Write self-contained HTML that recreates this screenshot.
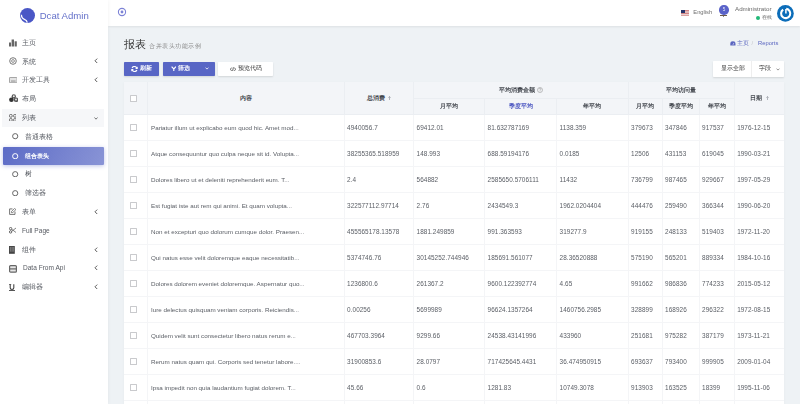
<!DOCTYPE html>
<html><head><meta charset="utf-8">
<style>
*{box-sizing:border-box;margin:0;padding:0}
html,body{width:800px;height:404px;overflow:hidden;}
body{filter:blur(0.35px);background:#eef2f5;font-family:"Liberation Sans",sans-serif;color:#414750}
.abs{position:absolute}
#sidebar{position:absolute;left:0;top:0;width:108px;height:404px;background:#fff;box-shadow:0 0 4px rgba(0,0,0,.06);z-index:3}
#nav{position:absolute;left:108px;top:0;width:692px;height:26px;background:#fff;box-shadow:0 1px 2px rgba(0,0,0,.075);z-index:2}
.logo-c{position:absolute;left:20px;top:7.5px;width:15px;height:15px;border-radius:50%;background:#4c5dc4}
.logo-t{position:absolute;left:39.7px;top:9.7px;font-size:9.6px;color:#6470c9;letter-spacing:0}
.mi{position:absolute;left:0;width:108px;height:18px;font-size:6.55px;color:#565a61}
.mi .ic{position:absolute;left:9px;top:5px;width:7px;height:7px}
.mi .tx{position:absolute;left:22px;top:4.9px;white-space:nowrap}
.mi .ch{position:absolute;left:94px;top:4px;font-size:7px;color:#777}
.sub .ic{left:12.5px;top:6px;width:6px;height:6px;border:1.1px solid #666;border-radius:50%}
.sub .tx{left:24.7px}
#title{position:absolute;left:124px;top:37.5px;font-size:10.6px;color:#333}
#subtitle{position:absolute;left:149px;top:42.3px;font-size:6.3px;letter-spacing:0.5px;color:#888}
.btn{position:absolute;top:61.8px;height:14.6px;border-radius:0.8px;font-size:5.6px;font-weight:bold;color:#fff;background:#5866c5;box-shadow:0 1px 2px rgba(0,0,0,.12)}
.btnw{background:#fff;color:#333;font-weight:normal}
table{position:absolute;left:124px;top:81.5px;width:660px;border-collapse:collapse;table-layout:fixed;background:#fff;box-shadow:0 1px 3px rgba(0,0,0,.04)}
th{background:#f3f5f8;font-size:5.9px;font-weight:bold;color:#41454c;height:16.7px;border:1px solid #ebeef2;text-align:center;white-space:nowrap;padding:0}
tr.h2 th{height:16.8px}
th[rowspan]{padding-top:1.8px}
th[colspan]{padding-top:1.6px}
th.c0[rowspan]{padding-top:2.6px}
td{font-size:6.4px;letter-spacing:0.05px;color:#5a5e65;height:26px;border:1px solid #f4f5f7;padding:0 0 0 2.6px;white-space:nowrap;overflow:hidden}
td.ct{font-size:6.25px;letter-spacing:0;padding-left:3.5px}
td.c0{text-align:left;padding:0 0 0 6.3px}
th.c0{text-align:left;padding:0 0 0 6.3px}
tr:first-child th{border-top:0}
th:first-child,td:first-child{border-left:0}
th:last-child,td:last-child{border-right:0}
.cb{display:inline-block;width:7px;height:7.6px;border:1px solid #c9cacd;border-radius:0.6px;background:#fff;vertical-align:middle;position:relative;top:-0.9px}
</style></head><body>
<div id="sidebar">
  <svg class="abs" style="left:20px;top:7.8px" width="15" height="15" viewBox="0 0 15 15"><circle cx="7.5" cy="7.5" r="7.5" fill="#4a57c6"/><path d="M1.4 6.8 Q1.6 10.6 4.8 11.6 Q6.8 12.2 7.3 14.6" fill="none" stroke="#fff" stroke-width="1.3"/></svg>
  <div class="logo-t">Dcat Admin</div>
  <div class="mi" style="top:34px"><svg class="abs" style="left:8.7px;top:5px" width="8" height="7.5" viewBox="0 0 8 7.5"><rect x="0" y="3.5" width="2" height="4" fill="#666"/><rect x="2.6" y="0.5" width="2.4" height="7" fill="#666"/><rect x="5.6" y="2.3" width="2.2" height="5.2" fill="#666"/></svg><span class="tx">主页</span></div>
<div class="mi" style="top:52.7px"><svg class="abs" style="left:8.6px;top:4.4px" width="8" height="8" viewBox="0 0 8 8"><circle cx="4" cy="4" r="3.3" fill="none" stroke="#6a6a6a" stroke-width="0.9"/><circle cx="4" cy="4" r="1.4" fill="none" stroke="#777" stroke-width="0.8"/></svg><span class="tx">系统</span><svg class="abs" style="left:94.2px;top:5.7px" width="4" height="5.6" viewBox="0 0 4 5.6"><path d="M3.2 0.6 L1 2.8 L3.2 5" fill="none" stroke="#5a5a5a" stroke-width="1"/></svg></div>
<div class="mi" style="top:71.2px"><svg class="abs" style="left:8.7px;top:5.8px" width="8.6" height="6.2" viewBox="0 0 8.6 6.2"><rect x="0.45" y="0.45" width="7.7" height="5.3" rx="0.6" fill="#e4e4e4" stroke="#999" stroke-width="0.9"/><rect x="2" y="3.6" width="4.6" height="0.9" fill="#888"/></svg><span class="tx">开发工具</span><svg class="abs" style="left:94.2px;top:5.7px" width="4" height="5.6" viewBox="0 0 4 5.6"><path d="M3.2 0.6 L1 2.8 L3.2 5" fill="none" stroke="#5a5a5a" stroke-width="1"/></svg></div>
<div class="mi" style="top:89.8px"><svg class="abs" style="left:8.7px;top:4.6px" width="9.5" height="8.5" viewBox="0 0 9.5 8.5"><circle cx="4.8" cy="2.4" r="2.2" fill="#555"/><circle cx="2.4" cy="5.8" r="2.3" fill="#333"/><circle cx="7" cy="5.8" r="2.3" fill="#555"/><circle cx="4.8" cy="2.2" r="1" fill="#eee"/><circle cx="7" cy="5.5" r="1" fill="#ddd"/></svg><span class="tx">布局</span></div>
<div class="mi" style="top:109px;left:2px;width:101.8px;height:17.6px;background:#f6f7f9"><svg class="abs" style="left:6.7px;top:4.6px" width="7.8" height="7.8" viewBox="0 0 7.8 7.8"><g fill="none" stroke="#666" stroke-width="1"><rect x="0.5" y="0.5" width="2.7" height="2.7" rx="1"/><rect x="4.6" y="0.5" width="2.7" height="2.7" rx="1"/><rect x="0.5" y="4.6" width="2.7" height="2.7" rx="1"/><rect x="4.6" y="4.6" width="2.7" height="2.7" rx="1"/></g></svg><span class="tx" style="left:20px">列表</span><svg class="abs" style="left:92px;top:7.6px" width="4" height="3" viewBox="0 0 4 3"><path d="M0.5 0.5 L2 2.2 L3.5 0.5" fill="none" stroke="#666" stroke-width="0.9"/></svg></div>
<div class="mi sub" style="top:127.8px"><svg class="abs" style="left:12.2px;top:5.7px" width="6.4" height="6.4" viewBox="0 0 6.4 6.4"><circle cx="3.2" cy="3.2" r="2.6" fill="none" stroke="#666" stroke-width="1"/></svg><span class="tx">普通表格</span></div>
<div class="mi sub" style="top:146.5px;left:3px;width:100.6px;height:18.6px;background:linear-gradient(118deg,#5c6bc6,rgba(92,107,198,.72));color:#fff;font-weight:bold;border-radius:1px;box-shadow:0 1px 4px rgba(92,107,198,.4)"><svg class="abs" style="left:9.2px;top:6px" width="6.4" height="6.4" viewBox="0 0 6.4 6.4"><circle cx="3.2" cy="3.2" r="2.6" fill="none" stroke="#fff" stroke-width="1"/></svg><span class="tx" style="left:21.7px;top:5.3px;font-size:6.3px">组合表头</span></div>
<div class="mi sub" style="top:165px"><svg class="abs" style="left:12.2px;top:5.7px" width="6.4" height="6.4" viewBox="0 0 6.4 6.4"><circle cx="3.2" cy="3.2" r="2.6" fill="none" stroke="#666" stroke-width="1"/></svg><span class="tx">树</span></div>
<div class="mi sub" style="top:184px"><svg class="abs" style="left:12.2px;top:5.7px" width="6.4" height="6.4" viewBox="0 0 6.4 6.4"><circle cx="3.2" cy="3.2" r="2.6" fill="none" stroke="#666" stroke-width="1"/></svg><span class="tx">筛选器</span></div>
<div class="mi" style="top:203px"><svg class="abs" style="left:8.8px;top:5px" width="7.5" height="7" viewBox="0 0 7.5 7"><path d="M3.5 0.9 L0.6 0.9 L0.6 6.4 L6 6.4 L6 3.6" fill="none" stroke="#666" stroke-width="0.9"/><path d="M2.4 4.6 L2.6 3.3 L5.6 0.4 L6.9 1.6 L3.8 4.5 Z" fill="none" stroke="#666" stroke-width="0.8"/></svg><span class="tx">表单</span><svg class="abs" style="left:94.2px;top:5.7px" width="4" height="5.6" viewBox="0 0 4 5.6"><path d="M3.2 0.6 L1 2.8 L3.2 5" fill="none" stroke="#5a5a5a" stroke-width="1"/></svg></div>
<div class="mi" style="top:222px"><svg class="abs" style="left:8.8px;top:5.3px" width="7.5" height="6.5" viewBox="0 0 7.5 6.5"><circle cx="1.6" cy="1.6" r="1.2" fill="none" stroke="#555" stroke-width="0.9"/><circle cx="1.6" cy="4.9" r="1.2" fill="none" stroke="#555" stroke-width="0.9"/><path d="M2.6 2.2 L7.2 5.6 M2.6 4.3 L7.2 0.9" stroke="#666" stroke-width="0.8"/></svg><span class="tx">Full Page</span></div>
<div class="mi" style="top:241.1px"><svg class="abs" style="left:9.4px;top:5px" width="6" height="8" viewBox="0 0 6 8"><rect x="0" y="0" width="5.8" height="7.8" fill="#444"/><rect x="0.9" y="0.9" width="4" height="4.8" fill="#777"/><rect x="2.6" y="0.9" width="0.6" height="4.8" fill="#444"/></svg><span class="tx">组件</span><svg class="abs" style="left:94.2px;top:5.7px" width="4" height="5.6" viewBox="0 0 4 5.6"><path d="M3.2 0.6 L1 2.8 L3.2 5" fill="none" stroke="#5a5a5a" stroke-width="1"/></svg></div>
<div class="mi" style="top:259.4px"><svg class="abs" style="left:9px;top:5.7px" width="8" height="7.8" viewBox="0 0 8 7.8"><rect x="0.6" y="0.6" width="6.8" height="6.6" rx="1" fill="#e6e6e6" stroke="#666" stroke-width="1.2"/><rect x="0.5" y="3.3" width="7" height="1.2" fill="#666"/></svg><span class="tx" style="left:23px">Data From Api</span><svg class="abs" style="left:94.2px;top:5.7px" width="4" height="5.6" viewBox="0 0 4 5.6"><path d="M3.2 0.6 L1 2.8 L3.2 5" fill="none" stroke="#5a5a5a" stroke-width="1"/></svg></div>
<div class="mi" style="top:278.3px"><svg class="abs" style="left:9.4px;top:5.6px" width="6" height="7" viewBox="0 0 6 7"><path d="M1.2 0.3 L1.2 3.8 Q1.2 5.5 3 5.5 Q4.8 5.5 4.8 3.8 L4.8 0.3" fill="none" stroke="#444" stroke-width="1.1"/><rect x="0" y="6.1" width="6" height="0.9" fill="#444"/><rect x="0" y="0" width="2.2" height="0.7" fill="#444"/></svg><span class="tx">编辑器</span><svg class="abs" style="left:94.2px;top:5.7px" width="4" height="5.6" viewBox="0 0 4 5.6"><path d="M3.2 0.6 L1 2.8 L3.2 5" fill="none" stroke="#5a5a5a" stroke-width="1"/></svg></div>
</div>
<div id="nav">
<svg class="abs" style="left:9px;top:7.3px" width="10" height="10" viewBox="0 0 10 10"><circle cx="5" cy="5" r="3.6" fill="none" stroke="#7c82d6" stroke-width="1.1"/><circle cx="5" cy="5" r="1.4" fill="#7c82d6"/></svg>
</div>
<svg class="abs" style="left:680.8px;top:10px;z-index:4" width="8.4" height="5.6" viewBox="0 0 8.4 5.6"><rect width="8.4" height="5.6" fill="#f3eeee"/><rect y="0" width="8.4" height="0.8" fill="#c96868"/><rect y="1.6" width="8.4" height="0.8" fill="#c96868"/><rect y="3.2" width="8.4" height="0.8" fill="#c96868"/><rect y="4.8" width="8.4" height="0.8" fill="#c96868"/><rect width="4" height="3" fill="#27346a"/></svg>
<div class="abs" style="left:693.3px;top:9.3px;font-size:5.75px;color:#6e6e6e;z-index:4">English</div>
<div class="abs" style="left:719.3px;top:5.2px;width:9.4px;height:9.4px;border-radius:50%;background:#5a63c9;color:#e8e9f7;font-size:4.6px;text-align:center;line-height:9.4px;z-index:4">5</div>
<div class="abs" style="left:720px;top:14.6px;width:6.8px;height:0.9px;background:#6b5a48;z-index:4"></div>
<div class="abs" style="left:722.7px;top:16.3px;width:1.2px;height:1px;background:#888;z-index:4"></div>
<div class="abs" style="left:735px;top:4.9px;font-size:6.2px;color:#6a6a6a;z-index:4">Administrator</div>
<div class="abs" style="left:756px;top:15.6px;width:4.2px;height:4.2px;border-radius:50%;background:#21b978;z-index:4"></div>
<div class="abs" style="left:762.2px;top:14.1px;font-size:5.4px;color:#666;z-index:4">在线</div>
<svg class="abs" style="left:776.6px;top:4.8px;z-index:4" width="17" height="17" viewBox="0 0 17 17"><circle cx="8.4" cy="8.4" r="8.4" fill="#0c6db9"/><path d="M6.2 4.6 A4.6 4.6 0 1 0 9.2 3.9" fill="none" stroke="#fff" stroke-width="2.1"/><path d="M8.9 4 L8.9 8.6" stroke="#fff" stroke-width="1.5"/></svg>
<div id="title">报表</div>
<div id="subtitle">合并表头功能示例</div>
<div class="btn" style="left:124px;width:35.3px"><svg class="abs" style="left:6.6px;top:4px" width="7" height="6" viewBox="0 0 7 6"><path d="M5.9 2.4 A2.6 2.6 0 0 0 1.1 1.9 M1.1 3.6 A2.6 2.6 0 0 0 5.9 4.1" fill="none" stroke="#fff" stroke-width="1.2"/><path d="M6.7 0.4 L6.7 3 L4.1 3 Z M0.3 5.6 L0.3 3 L2.9 3 Z" fill="#fff"/></svg><span class="abs" style="left:16.4px;top:3.6px">刷新</span></div>
<div class="btn" style="left:162.7px;width:52px"><svg class="abs" style="left:8px;top:4.3px" width="5.6" height="5.4" viewBox="0 0 5.6 5.4"><path d="M0.6 0.6 L2.8 3 L5 0.6 M2.8 3 L2.8 5.2" fill="none" stroke="#fff" stroke-width="1.15"/></svg><span class="abs" style="left:15.6px;top:3.6px">筛选</span><svg class="abs" style="left:42.7px;top:5.5px" width="4" height="3" viewBox="0 0 4 3"><path d="M0.5 0.6 L2 2.1 L3.5 0.6" fill="none" stroke="#fff" stroke-width="0.8"/></svg></div>
<div class="btn btnw" style="left:217.7px;width:55px"><svg class="abs" style="left:12.8px;top:4.9px" width="6" height="4.5" viewBox="0 0 6 4.5"><path d="M1.6 0.6 L0.4 2.25 L1.6 3.9 M4.4 0.6 L5.6 2.25 L4.4 3.9 M3.4 0.3 L2.6 4.2" fill="none" stroke="#444" stroke-width="0.8"/></svg><span class="abs" style="left:20.3px;top:3.2px">预览代码</span></div>
<div class="btn btnw" style="left:713px;width:71px;top:60.6px;height:16.3px"><span class="abs" style="left:8px;top:4.5px">显示全部</span><div class="abs" style="left:38px;top:0;width:0.5px;height:16.3px;background:#eee"></div><span class="abs" style="left:46px;top:4.5px">字段</span><svg class="abs" style="left:62.5px;top:7px" width="4" height="3" viewBox="0 0 4 3"><path d="M0.5 0.6 L2 2.1 L3.5 0.6" fill="none" stroke="#666" stroke-width="0.7"/></svg></div>
<svg class="abs" style="left:730px;top:41.2px" width="5.8" height="4.4" viewBox="0 0 5.8 4.4"><path d="M0.3 4.4 L0.3 2.7 A2.6 2.5 0 0 1 5.5 2.7 L5.5 4.4 Z" fill="#5a66c0"/><path d="M2.9 3.9 L3.9 1.9" stroke="#fff" stroke-width="0.55"/></svg>
<div class="abs" style="left:736.9px;top:40.1px;font-size:5.5px;color:#5a66c0;white-space:nowrap">主页</div>
<div class="abs" style="left:751.6px;top:39.7px;font-size:5.8px;color:#c5c8cc">/</div>
<div class="abs" style="left:758px;top:39.7px;font-size:5.8px;color:#5a66c0;white-space:nowrap">Reports</div>
<table>
<colgroup><col style="width:23px"><col style="width:197px"><col style="width:69.5px"><col style="width:71px"><col style="width:72px"><col style="width:71.5px"><col style="width:34px"><col style="width:37px"><col style="width:35px"><col style="width:50px"></colgroup>
<tr><th rowspan="2" class="c0"><span class="cb"></span></th><th rowspan="2">内容</th><th rowspan="2">总消费 <svg style="vertical-align:0px;margin-left:1.8px" width="3" height="4.4" viewBox="0 0 3 4.4"><path d="M1.5 4.3 L1.5 0.6 M0.4 1.7 L1.5 0.5 L2.6 1.7" fill="none" stroke="#9499a0" stroke-width="0.7"/></svg></th><th colspan="3">平均消费金额 <svg style="vertical-align:-1px" width="6" height="6" viewBox="0 0 6 6"><circle cx="3" cy="3" r="2.5" fill="none" stroke="#999" stroke-width="0.6"/><path d="M2.1 2.3 Q2.1 1.4 3 1.4 Q3.9 1.4 3.9 2.2 Q3.9 2.8 3 3.1 L3 3.7" fill="none" stroke="#999" stroke-width="0.55"/><circle cx="3" cy="4.5" r="0.35" fill="#999"/></svg></th><th colspan="3">平均访问量</th><th rowspan="2">日期 <svg style="vertical-align:0px;margin-left:1.8px" width="3" height="4.4" viewBox="0 0 3 4.4"><path d="M1.5 4.3 L1.5 0.6 M0.4 1.7 L1.5 0.5 L2.6 1.7" fill="none" stroke="#9499a0" stroke-width="0.7"/></svg></th></tr>
<tr class="h2"><th>月平均</th><th style="color:#4a55c0">季度平均</th><th>年平均</th><th>月平均</th><th>季度平均</th><th>年平均</th></tr>
<tr><td class="c0"><span class="cb"></span></td><td class="ct">Pariatur illum ut explicabo eum quod hic. Amet mod...</td><td>4940056.7</td><td>69412.01</td><td>81.632787169</td><td>1138.359</td><td>379673</td><td>347846</td><td>917537</td><td>1976-12-15</td></tr>
<tr><td class="c0"><span class="cb"></span></td><td class="ct">Atque consequuntur quo culpa neque sit id. Volupta...</td><td>38255365.518959</td><td>148.993</td><td>688.59194176</td><td>0.0185</td><td>12506</td><td>431153</td><td>619045</td><td>1990-03-21</td></tr>
<tr><td class="c0"><span class="cb"></span></td><td class="ct">Dolores libero ut et deleniti reprehenderit eum. T...</td><td>2.4</td><td>564882</td><td>2585650.5706111</td><td>11432</td><td>736799</td><td>987465</td><td>929667</td><td>1997-05-29</td></tr>
<tr><td class="c0"><span class="cb"></span></td><td class="ct">Est fugiat iste aut rem qui animi. Et quam volupta...</td><td>322577112.97714</td><td>2.76</td><td>2434549.3</td><td>1962.0204404</td><td>444476</td><td>259490</td><td>366344</td><td>1990-06-20</td></tr>
<tr><td class="c0"><span class="cb"></span></td><td class="ct">Non et excepturi quo dolorum cumque dolor. Praesen...</td><td>455565178.13578</td><td>1881.249859</td><td>991.363593</td><td>319277.9</td><td>919155</td><td>248133</td><td>519403</td><td>1972-11-20</td></tr>
<tr><td class="c0"><span class="cb"></span></td><td class="ct">Qui natus esse velit doloremque eaque necessitatib...</td><td>5374746.76</td><td>30145252.744946</td><td>185691.561077</td><td>28.36520888</td><td>575190</td><td>565201</td><td>889334</td><td>1984-10-16</td></tr>
<tr><td class="c0"><span class="cb"></span></td><td class="ct">Dolores dolorem eveniet doloremque. Aspernatur quo...</td><td>1236800.6</td><td>261367.2</td><td>9600.122392774</td><td>4.65</td><td>991662</td><td>986836</td><td>774233</td><td>2015-05-12</td></tr>
<tr><td class="c0"><span class="cb"></span></td><td class="ct">Iure delectus quisquam veniam corporis. Reiciendis...</td><td>0.00256</td><td>5699989</td><td>96624.1357264</td><td>1460756.2985</td><td>328899</td><td>168926</td><td>296322</td><td>1972-08-15</td></tr>
<tr><td class="c0"><span class="cb"></span></td><td class="ct">Quidem velit sunt consectetur libero natus rerum e...</td><td>467703.3964</td><td>9299.66</td><td>24538.43141996</td><td>433960</td><td>251681</td><td>975282</td><td>387179</td><td>1973-11-21</td></tr>
<tr><td class="c0"><span class="cb"></span></td><td class="ct">Rerum natus quam qui. Corporis sed tenetur labore....</td><td>31900853.6</td><td>28.0797</td><td>717425645.4431</td><td>36.474950915</td><td>693637</td><td>793400</td><td>999905</td><td>2009-01-04</td></tr>
<tr><td class="c0"><span class="cb"></span></td><td class="ct">Ipsa impedit non quia laudantium fugiat dolorem. T...</td><td>45.66</td><td>0.6</td><td>1281.83</td><td>10749.3078</td><td>913903</td><td>163525</td><td>18399</td><td>1995-11-06</td></tr>

<tr><td class="c0"><span class="cb"></span></td><td class="ct">Voluptas quia sit et officia.</td><td>1.5</td><td>3.2</td><td>4.1</td><td>5.5</td><td>1</td><td>2</td><td>3</td><td>2001-01-01</td></tr>
</table>
</body></html>
